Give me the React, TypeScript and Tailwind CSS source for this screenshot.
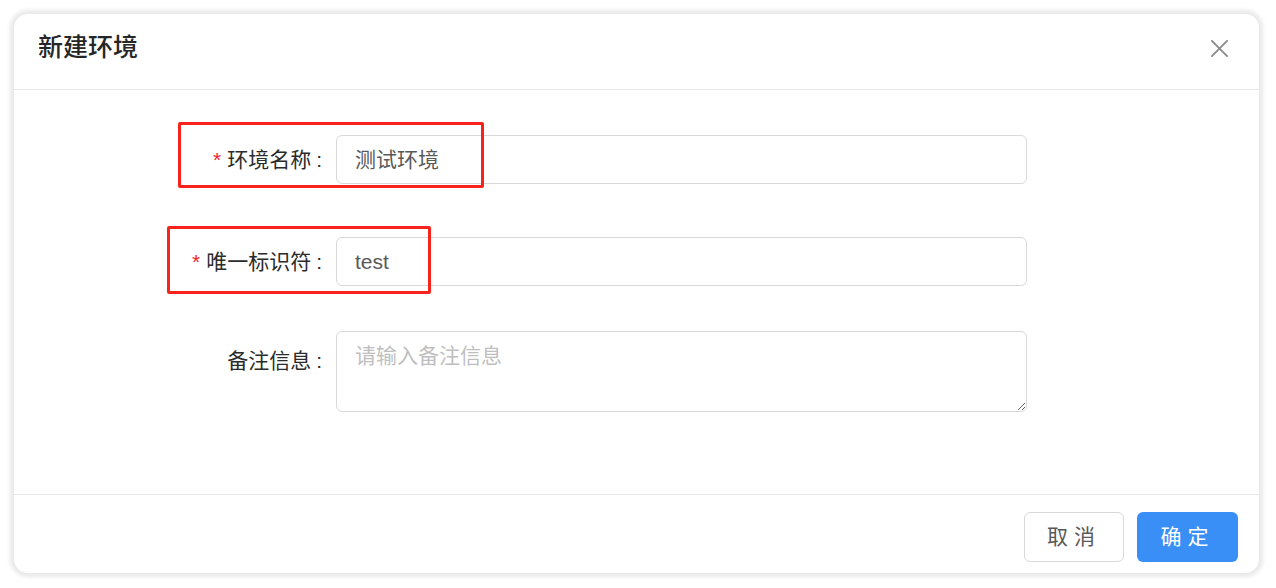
import React from "react";

const font = { fontFamily: '"Liberation Sans", "Noto Sans CJK SC", sans-serif' };

function Label({ text, required }: { text: string; required?: boolean }) {
  return (
    <div className="flex items-center justify-end pr-[12px] text-[21px] text-[#2b2b2b]">
      {required && <span className="mr-[6px] text-[#f5222d]">*</span>}
      <span>{text}</span>
      <span className="ml-[5px] mr-[2px]">:</span>
    </div>
  );
}

export default function App() {
  return (
    <div className="h-[588px] w-[1276px] bg-white p-[14px]" style={font}>
      <div className="flex h-[559px] w-[1245px] flex-col rounded-[14px] bg-white shadow-[0_0_4px_4px_rgba(0,0,0,0.09)]">
        <div className="flex h-[76px] items-center justify-between border-b border-[#e8e8e8] pb-[7px] pl-[24px] pr-[30px]">
          <div className="text-[25px] font-medium text-[#262626]">新建环境</div>
          <svg width="19" height="19" viewBox="0 0 20 20" className="text-[#8c8c8c]">
            <path d="M2 2 L18 18 M18 2 L2 18" stroke="currentColor" strokeWidth="2" strokeLinecap="round" />
          </svg>
        </div>
        <div className="relative flex-1 border-b border-[#e8e8e8] pt-[45px]">
          <div className="grid grid-cols-[322px_691px] items-center">
            <Label text="环境名称" required />
            <div className="flex h-[49px] items-center rounded-[6px] border border-[#d9d9d9] pl-[18px] text-[21px] text-[#595959]">
              测试环境
            </div>
            <div className="h-[53px]" />
            <div className="h-[53px]" />
            <Label text="唯一标识符" required />
            <div className="flex h-[49px] items-center rounded-[6px] border border-[#d9d9d9] pl-[18px] text-[21px] text-[#595959]">
              test
            </div>
            <div className="h-[45px]" />
            <div className="h-[45px]" />
            <div className="self-start pt-[14px]">
              <Label text="备注信息" />
            </div>
            <textarea
              className="h-[81px] resize-y rounded-[6px] border border-[#d9d9d9] px-[18px] py-[8px] text-[21px] text-[#595959] outline-none placeholder:text-[#bfbfbf]"
              placeholder="请输入备注信息"
              style={font}
            />
          </div>
          <div className="pointer-events-none absolute left-[164px] top-[32px] h-[66px] w-[306px] rounded-[2px] border-[3px] border-[#f8231a]" />
          <div className="pointer-events-none absolute left-[153px] top-[136px] h-[68px] w-[264px] rounded-[2px] border-[3px] border-[#f8231a]" />
        </div>
        <div className="flex h-[78px] items-start justify-end gap-[13px] pr-[21px] pt-[17px]">
          <button className="h-[50px] w-[100px] rounded-[6px] border border-[#d9d9d9] bg-white text-[21px] tracking-[6px] text-[#595959]" style={font}>
            取消
          </button>
          <button className="h-[50px] w-[101px] rounded-[6px] bg-[#3a8ff7] text-[21px] tracking-[6px] text-white" style={font}>
            确定
          </button>
        </div>
      </div>
    </div>
  );
}
